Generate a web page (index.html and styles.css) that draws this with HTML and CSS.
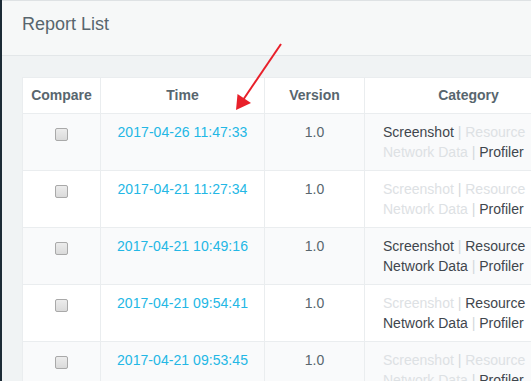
FILE: index.html
```html
<!DOCTYPE html>
<html>
<head>
<meta charset="utf-8">
<link rel="stylesheet" href="styles.css">
</head>
<body>
<div class="app">
  <header class="page-head">
    <h1 class="title">Report List</h1>
  </header>
  <main class="content">
    <table class="reports">
      <colgroup>
        <col class="c-compare"><col class="c-time"><col class="c-version"><col class="c-cat">
      </colgroup>
      <thead>
        <tr><th>Compare</th><th>Time</th><th>Version</th><th>Category</th></tr>
      </thead>
      <tbody>
        <tr>
          <td class="cmp"><input type="checkbox" class="chk"></td>
          <td class="time"><a href="#">2017-04-26 11:47:33</a></td>
          <td class="ver">1.0</td>
          <td class="cat"><div><span class="on">Screenshot</span><span class="sep"> | </span><span class="off">Resource</span></div><div><span class="off">Network Data</span><span class="sep"> | </span><span class="on">Profiler</span></div></td>
        </tr>
        <tr>
          <td class="cmp"><input type="checkbox" class="chk"></td>
          <td class="time"><a href="#">2017-04-21 11:27:34</a></td>
          <td class="ver">1.0</td>
          <td class="cat"><div><span class="off">Screenshot</span><span class="sep"> | </span><span class="off">Resource</span></div><div><span class="off">Network Data</span><span class="sep"> | </span><span class="on">Profiler</span></div></td>
        </tr>
        <tr>
          <td class="cmp"><input type="checkbox" class="chk"></td>
          <td class="time"><a href="#">2017-04-21 10:49:16</a></td>
          <td class="ver">1.0</td>
          <td class="cat"><div><span class="on">Screenshot</span><span class="sep"> | </span><span class="on">Resource</span></div><div><span class="on">Network Data</span><span class="sep"> | </span><span class="on">Profiler</span></div></td>
        </tr>
        <tr>
          <td class="cmp"><input type="checkbox" class="chk"></td>
          <td class="time"><a href="#">2017-04-21 09:54:41</a></td>
          <td class="ver">1.0</td>
          <td class="cat"><div><span class="off">Screenshot</span><span class="sep"> | </span><span class="on">Resource</span></div><div><span class="on">Network Data</span><span class="sep"> | </span><span class="on">Profiler</span></div></td>
        </tr>
        <tr>
          <td class="cmp"><input type="checkbox" class="chk"></td>
          <td class="time"><a href="#">2017-04-21 09:53:45</a></td>
          <td class="ver">1.0</td>
          <td class="cat"><div><span class="off">Screenshot</span><span class="sep"> | </span><span class="off">Resource</span></div><div><span class="off">Network Data</span><span class="sep"> | </span><span class="on">Profiler</span></div></td>
        </tr>
      </tbody>
    </table>
  </main>
</div>
<svg class="arrow" width="531" height="381" viewBox="0 0 531 381">
  <line x1="281" y1="44" x2="243" y2="100" stroke="#e8202a" stroke-width="2"/>
  <polygon points="236,110 237.5,94 251,103" fill="#e8202a"/>
</svg>
</body>
</html>
```

FILE: styles.css
```css
html, body {
  margin: 0;
  padding: 0;
  height: 100%;
  overflow: hidden;
}
body {
  font-family: "Liberation Sans", Arial, sans-serif;
  font-size: 14px;
  color: #58666e;
  background: #f0f3f4;
  position: relative;
}
.app {
  border-left: 2px solid #1c2b36;
  min-height: 100%;
  box-sizing: border-box;
}
.page-head {
  background: #f6f8f8;
  border-top: 1px solid #dee2e4;
  border-bottom: 1px solid #e3e7e9;
  padding: 13px 20px 21px;
}
.title {
  margin: 0;
  font-size: 18px;
  font-weight: normal;
  line-height: 20px;
  color: #58666e;
}
.content {
  padding: 21px 0 0 20px;
}
.reports {
  border-collapse: collapse;
  table-layout: fixed;
  width: 550px;
  background: #fff;
  border: 1px solid #e7eaec;
}
.c-compare { width: 78px; }
.c-time { width: 164px; }
.c-version { width: 100px; }
.c-cat { width: 208px; }
.reports th,
.reports td {
  border: 1px solid #eaedef;
  line-height: 20px;
  vertical-align: top;
}
.reports th {
  padding: 7px 8px 8px;
  font-weight: bold;
  color: #58666e;
  text-align: center;
  white-space: nowrap;
}
.reports td {
  padding: 8px 8px 8px;
  height: 40px;
}
.reports tbody tr:nth-child(odd) {
  background: #f9fafb;
}
.cmp, .time, .ver {
  text-align: center;
}
.time a {
  color: #23b7e5;
  text-decoration: none;
  letter-spacing: 0.05px;
}
.ver {
  color: #58666e;
}
.reports td.cat {
  padding-left: 18px;
  white-space: nowrap;
}
.on { color: #3f464d; }
.off { color: #dde1e4; }
.sep { color: #d3d8db; }
.chk {
  -webkit-appearance: none;
  appearance: none;
  display: block;
  width: 13px;
  height: 13px;
  margin: 6px auto 0;
  box-sizing: border-box;
  border: 1px solid #a9a9a9;
  border-radius: 2px;
  background: linear-gradient(#ececec, #dadada);
}
.arrow {
  position: absolute;
  left: 0;
  top: 0;
  pointer-events: none;
}
```
